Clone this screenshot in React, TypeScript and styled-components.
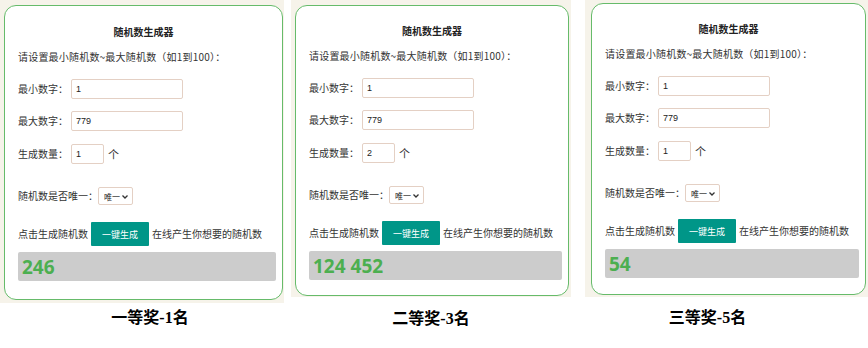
import React from 'react';
import styled, { createGlobalStyle } from 'styled-components';

const GlobalStyle = createGlobalStyle`
  body {
    margin: 0;
    background: #fff;
    font-family: "Noto Sans CJK SC", "Noto Sans", sans-serif;
  }
`;

const Row = styled.div`
  display: flex;
  align-items: flex-start;
`;

const Shot = styled.div`
  display: flex;
  flex-direction: column;
  width: ${(p) => p.$w}px;
  margin-left: ${(p) => p.$ml}px;
`;

/* beige page behind the card in each screenshot */
const Frame = styled.div`
  background: #f6f3ea;
  padding: ${(p) => p.$pt}px 0 ${(p) => p.$pb}px ${(p) => p.$pl}px;
`;

const Card = styled.div`
  width: ${(p) => p.$w}px;
  box-sizing: border-box;
  background: #fff;
  border: 1.5px solid #66bb6a;
  border-radius: 12px;
  padding: ${(p) => p.$top}px 6px ${(p) => p.$bottom}px 13px;
  display: flex;
  flex-direction: column;
  color: #333;
  font-size: 10px;
`;

const Title = styled.div`
  margin-left: -7px;
  text-align: center;
  font-weight: 700;
  font-size: 10px;
  line-height: 16px;
  color: #222;
`;

const Intro = styled.div`
  margin-top: 9px;
  line-height: 16px;
  letter-spacing: 0.2px;
`;

const Field = styled.div`
  display: flex;
  align-items: center;
  margin-top: ${(p) => p.$mt}px;
  line-height: 16px;
  white-space: nowrap;
`;

const Input = styled.input`
  width: ${(p) => p.$w}px;
  height: 20px;
  box-sizing: border-box;
  margin: 0 0 0 3px;
  padding: 0 4px;
  border: 1px solid #e4d0c4;
  border-radius: 2px;
  font-family: "Liberation Sans", Arial, sans-serif;
  font-size: 9px;
  color: #222;
  outline: none;
`;

const Unit = styled.span`
  margin-left: 4px;
  font-size: 11px;
`;

const SelectBox = styled.span`
  position: relative;
  display: inline-flex;
  width: 35px;
  height: 18px;
  box-sizing: border-box;
  border: 1px solid #e4d0c4;
  border-radius: 2px;

  svg {
    position: absolute;
    right: 4px;
    top: 7px;
    pointer-events: none;
  }
`;

const Select = styled.select`
  appearance: none;
  width: 100%;
  border: none;
  background: transparent;
  padding: 0 0 0 5px;
  font-family: "Noto Sans CJK SC", sans-serif;
  font-size: 8px;
  color: #222;
  outline: none;
`;

const Button = styled.button`
  width: 58px;
  height: 24px;
  margin: 0 3px;
  border: none;
  border-radius: 1px;
  background: #009688;
  color: #fff;
  font-family: "Noto Sans CJK SC", sans-serif;
  font-size: 9px;
  padding: 0;
`;

const Result = styled.div`
  margin-top: 6px;
  height: 29px;
  display: flex;
  align-items: center;
  padding-left: 4px;
  background: #cccccc;
  border-radius: 2px;
  font-family: "Noto Sans", sans-serif;
  font-weight: 700;
  font-size: 19px;
  color: #4caf50;
`;

const Caption = styled.div`
  margin-top: ${(p) => p.$mt}px;
  padding-left: ${(p) => (p.$shift > 0 ? p.$shift * 2 : 0)}px;
  padding-right: ${(p) => (p.$shift < 0 ? -p.$shift * 2 : 0)}px;
  text-align: center;
  font-family: "Liberation Serif", "Noto Sans CJK SC", serif;
  font-weight: 700;
  font-size: 16px;
  line-height: 20px;
  color: #000;
`;

const Chevron = () => (
  <svg width="6" height="4" viewBox="0 0 6 4">
    <polyline points="0.5,0.5 3,3 5.5,0.5" fill="none" stroke="#333" strokeWidth="1.3" />
  </svg>
);

const shots = [
  { w: 284, ml: 0, pt: 5, pl: 4, pb: 3, card: 279, top: 18, bottom: 18, count: '1', result: '246', caption: '一等奖-1名', shift: 8, capMt: 5 },
  { w: 280, ml: 7, pt: 5, pl: 4, pb: 1, card: 274, top: 17, bottom: 15, count: '2', result: '124 452', caption: '二等奖-3名', shift: 0, capMt: 12 },
  { w: 283, ml: 14, pt: 3, pl: 6, pb: 2, card: 275, top: 17, bottom: 16, count: '1', result: '54', caption: '三等奖-5名', shift: -19, capMt: 11 },
];

function Generator({ s }) {
  return (
    <Card $w={s.card} $top={s.top} $bottom={s.bottom}>
      <Title>随机数生成器</Title>
      <Intro>请设置最小随机数~最大随机数（如1到100）：</Intro>
      <Field $mt={14}>
        最小数字：<Input $w={112} defaultValue="1" />
      </Field>
      <Field $mt={12}>
        最大数字：<Input $w={112} defaultValue="779" />
      </Field>
      <Field $mt={13}>
        生成数量：<Input $w={33} defaultValue={s.count} />
        <Unit>个</Unit>
      </Field>
      <Field $mt={23}>
        随机数是否唯一：
        <SelectBox>
          <Select defaultValue="1">
            <option value="1">唯一</option>
            <option value="0">不唯一</option>
          </Select>
          <Chevron />
        </SelectBox>
      </Field>
      <Field $mt={17}>
        点击生成随机数<Button>一键生成</Button>在线产生你想要的随机数
      </Field>
      <Result>{s.result}</Result>
    </Card>
  );
}

export default function App() {
  return (
    <>
      <GlobalStyle />
      <Row>
        {shots.map((s) => (
          <Shot key={s.caption} $w={s.w} $ml={s.ml}>
            <Frame $pt={s.pt} $pl={s.pl} $pb={s.pb}>
              <Generator s={s} />
            </Frame>
            <Caption $mt={s.capMt} $shift={s.shift}>{s.caption}</Caption>
          </Shot>
        ))}
      </Row>
    </>
  );
}
